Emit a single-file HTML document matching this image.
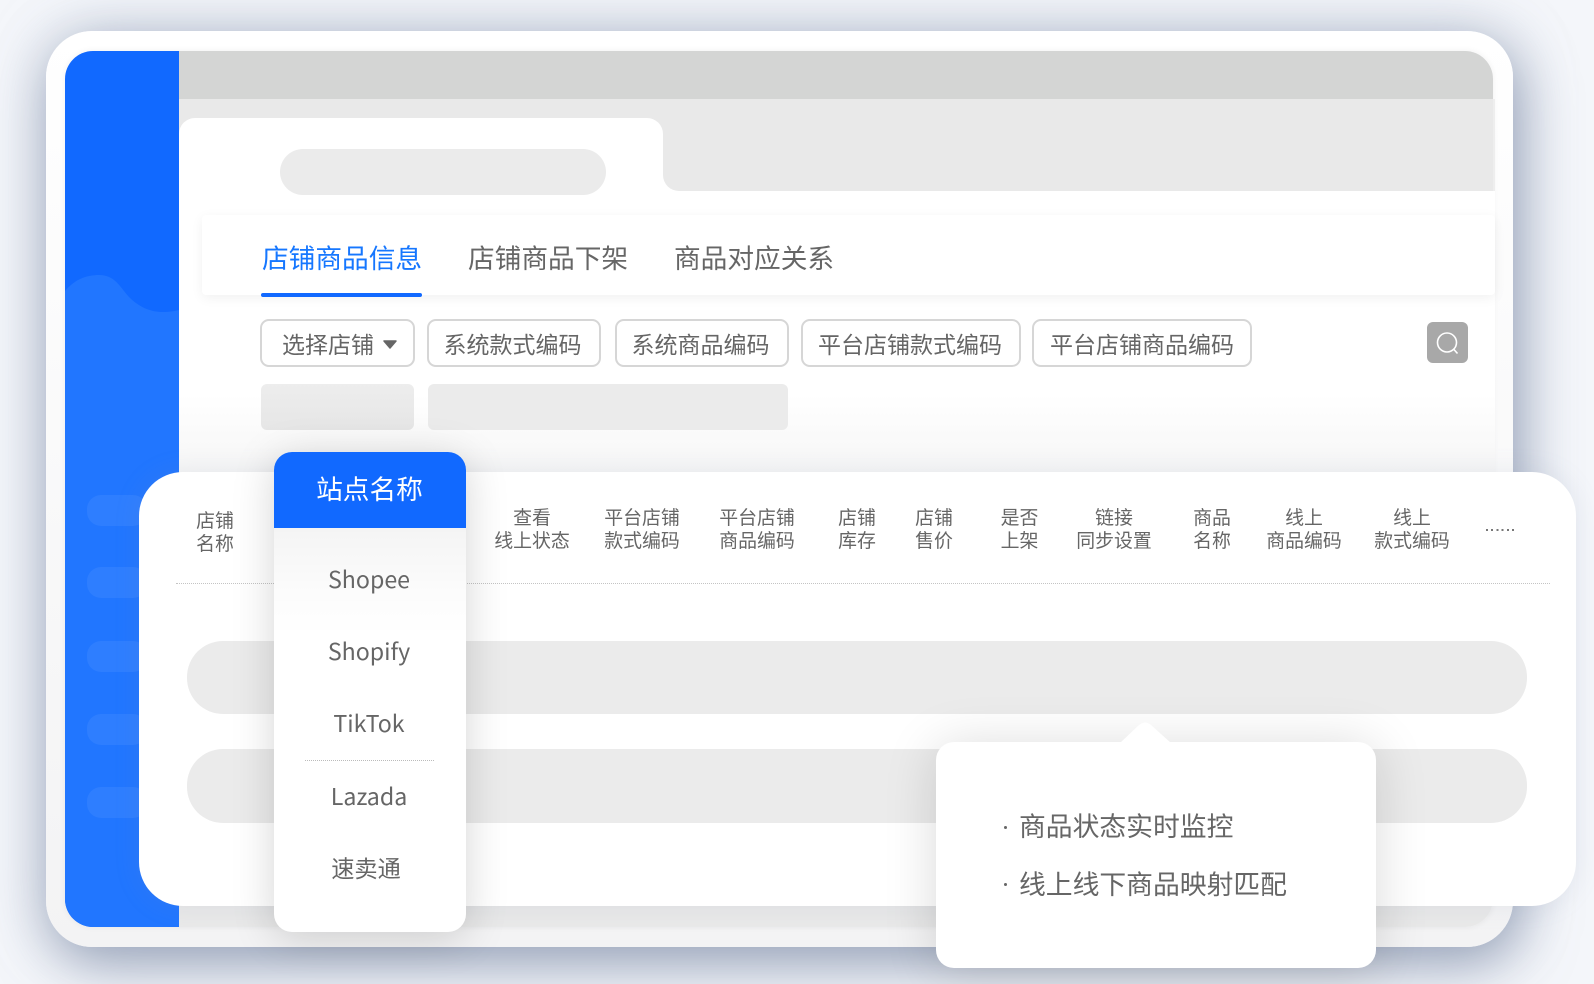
<!DOCTYPE html>
<html lang="zh">
<head>
<meta charset="utf-8">
<title>店铺商品信息</title>
<style>
html,body{margin:0;padding:0}
body{width:1594px;height:984px;position:relative;overflow:hidden;background:#f4f6fa;font-family:"Liberation Sans","Noto Sans CJK SC",sans-serif;color:#666}
.a{position:absolute;box-sizing:border-box}
.t{white-space:nowrap;text-align:center;transform:translateX(-50%);font-family:"Noto Sans CJK SC","Liberation Sans",sans-serif}
.tab{font-size:26.7px;line-height:40px;top:236.5px;white-space:nowrap;font-family:"Noto Sans CJK SC",sans-serif}
.f{top:319px;height:48px;border:2px solid #d6d6d6;border-radius:9px;background:#fff;font-size:23px;line-height:44px;text-align:center;white-space:nowrap;font-family:"Noto Sans CJK SC",sans-serif}
.h{font-size:18.9px;line-height:23px;top:505px}
.m{font-size:23.2px;line-height:32px;left:369px}
.sp{left:87px;width:60px;height:31px;border-radius:14px;background:#2e7eff}
.r{left:187px;width:1340px;height:73px;border-radius:36px;background:#ebebeb}
.tip{left:1019px;font-size:26.8px;line-height:40px;white-space:nowrap;font-family:"Noto Sans CJK SC",sans-serif}
.dot{left:1003.5px;width:3px;height:3px;border-radius:50%;background:#666}
</style>
</head>
<body>
<!-- device frame -->
<div class="a" style="left:46px;top:31px;width:1467px;height:916px;border-radius:46px;background:linear-gradient(#fff,#f3f3f4);box-shadow:6px 16px 56px rgba(110,125,155,.66),0 0 60px rgba(170,182,205,.4)"></div>
<!-- inner screen -->
<div class="a" style="left:65px;top:51px;width:1428px;height:876px;border-radius:28px;overflow:hidden;background:#fff;box-shadow:0 0 7px rgba(0,0,0,.06)">
  <div class="a" style="left:0;top:0;width:114px;height:876px;background:#1169ff">
    <svg class="a" style="left:0;top:0" width="114" height="876" viewBox="0 0 114 876"><path d="M0 240C10 228 22 224 34 224C50 224 55 236 64 246C76 258 88 261 98 261C104 261 110 260 114 259V876H0Z" fill="#2176ff"/></svg>
  </div>
  <div class="a sp" style="left:22px;top:444px"></div>
  <div class="a sp" style="left:22px;top:516px"></div>
  <div class="a sp" style="left:22px;top:590px"></div>
  <div class="a sp" style="left:22px;top:663px"></div>
  <div class="a sp" style="left:22px;top:736px"></div>
  <div class="a" style="left:114px;top:0;width:1316px;height:48px;background:#d4d5d4"></div>
  <div class="a" style="left:114px;top:48px;width:1316px;height:828px;background:#e9e9e9"></div>
</div>
<!-- white content area -->
<div class="a" style="left:1493px;top:99px;width:2px;height:92px;background:#eeeeee"></div>
<div class="a" style="left:179px;top:118px;width:484px;height:80px;background:#fff;border-radius:16px 16px 0 0"></div>
<div class="a" style="left:179px;top:191px;width:1316px;height:290px;background:linear-gradient(#fff 0,#fff 70%,#f5f5f5 100%)"></div>
<div class="a" style="left:663px;top:175px;width:16px;height:16px;background:#fff"></div>
<div class="a" style="left:663px;top:170px;width:40px;height:21px;background:#e9e9e9;border-radius:0 0 0 16px"></div>
<div class="a" style="left:280px;top:149px;width:326px;height:46px;border-radius:23px;background:#ebebeb"></div>
<!-- tab bar -->
<div class="a" style="left:202px;top:215px;width:1293px;height:80px;background:#fff;border-radius:4px;box-shadow:0 3px 12px rgba(0,0,0,.06)"></div>
<div class="a tab" style="left:262px;color:#1677ff">店铺商品信息</div>
<div class="a tab" style="left:468px">店铺商品下架</div>
<div class="a tab" style="left:674px">商品对应关系</div>
<div class="a" style="left:261px;top:293px;width:161px;height:4px;background:#1169ff;border-radius:2px"></div>
<!-- filters -->
<div class="a f" style="left:260px;width:155px;text-align:left;padding-left:20px">选择店铺</div>
<svg class="a" style="left:382px;top:339px" width="16" height="11" viewBox="0 0 16 11"><path d="M2 2H14L8 9Z" fill="#666" stroke="#666" stroke-width="1.5" stroke-linejoin="round"/></svg>
<div class="a f" style="left:427px;width:174px;padding-right:3px">系统款式编码</div>
<div class="a f" style="left:615px;width:174px;padding-right:3px">系统商品编码</div>
<div class="a f" style="left:801px;width:220px;padding-right:2px">平台店铺款式编码</div>
<div class="a f" style="left:1032px;width:220px">平台店铺商品编码</div>
<div class="a" style="left:1427px;top:322px;width:41px;height:41px;border-radius:6px;background:#a8a8a8"></div>
<svg class="a" style="left:1428px;top:322px" width="40" height="41" viewBox="0 0 40 41"><circle cx="19" cy="20.5" r="9.5" fill="none" stroke="#fff" stroke-width="1.6"/><path d="M25.5 27L29.5 31.5" stroke="#fff" stroke-width="1.6" fill="none"/></svg>
<div class="a" style="left:260.5px;top:384px;width:153.5px;height:46px;border-radius:6px;background:linear-gradient(#ededed,#e6e6e6)"></div>
<div class="a" style="left:428px;top:384px;width:360px;height:46px;border-radius:6px;background:#ebebeb"></div>
<!-- table card -->
<div class="a" style="left:139px;top:472px;width:1437px;height:434px;border-radius:44px;background:#fff;box-shadow:0 0 26px rgba(130,145,170,.14)"></div>
<div class="a t h" style="left:215px;top:508px">店铺<br>名称</div>
<div class="a t h" style="left:532px">查看<br>线上状态</div>
<div class="a t h" style="left:642px">平台店铺<br>款式编码</div>
<div class="a t h" style="left:757px">平台店铺<br>商品编码</div>
<div class="a t h" style="left:857px">店铺<br>库存</div>
<div class="a t h" style="left:934px">店铺<br>售价</div>
<div class="a t h" style="left:1019.5px">是否<br>上架</div>
<div class="a t h" style="left:1114px">链接<br>同步设置</div>
<div class="a t h" style="left:1212px">商品<br>名称</div>
<div class="a t h" style="left:1304px">线上<br>商品编码</div>
<div class="a t h" style="left:1412px">线上<br>款式编码</div>
<div class="a" style="left:1486px;top:529px;width:30px;height:2px;background:repeating-linear-gradient(90deg,#777 0 2px,transparent 2px 5.2px)"></div>
<div class="a" style="left:176px;top:583px;width:1374px;border-top:1px dotted #c4c4c4"></div>
<div class="a r" style="top:641px"></div>
<div class="a r" style="top:749px;height:74px"></div>
<!-- dropdown -->
<div class="a" style="left:273.5px;top:452px;width:192px;height:480px;border-radius:18px;background:#fff;box-shadow:0 6px 42px rgba(0,0,0,.17);overflow:hidden">
  <div class="a" style="left:0;top:76px;width:192px;height:110px;background:linear-gradient(rgba(0,0,0,.045),rgba(0,0,0,.012) 60%,rgba(0,0,0,0))"></div>
</div>
<div class="a t" style="left:273.5px;top:452px;width:192px;height:76px;border-radius:18px 18px 0 0;background:#1169ff;color:#fff;font-size:26.7px;line-height:72px;transform:none">站点名称</div>
<div class="a t m" style="top:562px">Shopee</div>
<div class="a t m" style="top:634px">Shopify</div>
<div class="a t m" style="top:706px">TikTok</div>
<div class="a" style="left:305px;top:760px;width:129px;border-top:1px dotted #bbb"></div>
<div class="a t m" style="top:779px">Lazada</div>
<div class="a t m" style="left:366px;top:851px">速卖通</div>
<!-- tooltip -->
<div class="a" style="left:936px;top:742px;width:440px;height:226px;border-radius:18px;background:#fff;box-shadow:0 4px 52px rgba(0,0,0,.15)"></div>
<svg class="a" style="left:1115px;top:718px" width="60" height="28" viewBox="0 0 60 28"><path d="M5 25L24 7Q30 2 36 7L56 25Z" fill="#fff"/></svg>
<div class="a dot" style="top:826px"></div>
<div class="a dot" style="top:883px"></div>
<div class="a tip" style="top:805px">商品状态实时监控</div>
<div class="a tip" style="top:863px">线上线下商品映射匹配</div>
</body>
</html>
